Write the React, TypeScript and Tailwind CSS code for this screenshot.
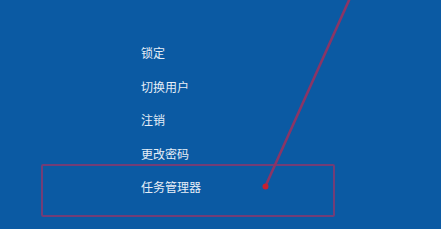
import React from "react";

const items = ["锁定", "切换用户", "注销", "更改密码", "任务管理器"];

export default function App() {
  return (
    <div className="relative h-[229px] w-[441px] overflow-hidden bg-[#0b5aa3] font-['Noto_Sans_CJK_SC',sans-serif]">
      <ul className="flex flex-col pl-[141px] pt-[44px]">
        {items.map((item) => (
          <li key={item} className="h-[33.5px] text-[12px] leading-[18px] text-[#e6eef7]">
            {item}
          </li>
        ))}
      </ul>

      {/* annotation box around the last item */}
      <div className="absolute left-[41px] top-[164px] h-[53px] w-[294px] rounded-[2px] border-[2.5px] border-[#7d3a72]/90" />

      {/* annotation arrow */}
      <svg className="pointer-events-none absolute inset-0" width="441" height="229" viewBox="0 0 441 229">
        <line x1="350" y1="-2" x2="266" y2="185" stroke="#8a3566" strokeWidth="2.6" strokeLinecap="round" />
        <circle cx="265.5" cy="186.5" r="3" fill="#c8202e" />
      </svg>
    </div>
  );
}
